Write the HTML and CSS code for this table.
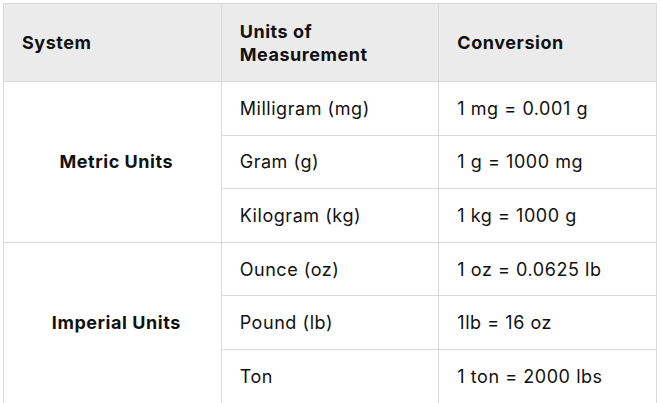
FILE: index.html
```html
<!DOCTYPE html>
<html>
<head>
<meta charset="utf-8">
<link rel="stylesheet" href="styles.css">
</head>
<body>
<table class="units">
  <thead>
    <tr>
      <th>System</th>
      <th>Units of<br>Measurement</th>
      <th>Conversion</th>
    </tr>
  </thead>
  <tbody>
    <tr>
      <td class="system" rowspan="3">Metric Units</td>
      <td>Milligram (mg)</td>
      <td>1 mg = 0.001 g</td>
    </tr>
    <tr>
      <td>Gram (g)</td>
      <td>1 g = 1000 mg</td>
    </tr>
    <tr>
      <td>Kilogram (kg)</td>
      <td>1 kg = 1000 g</td>
    </tr>
    <tr>
      <td class="system" rowspan="3">Imperial Units</td>
      <td>Ounce (oz)</td>
      <td>1 oz = 0.0625 lb</td>
    </tr>
    <tr>
      <td>Pound (lb)</td>
      <td>1lb = 16 oz</td>
    </tr>
    <tr>
      <td>Ton</td>
      <td>1 ton = 2000 lbs</td>
    </tr>
  </tbody>
</table>
</body>
</html>
```
FILE: styles.css
```css
html, body {
  margin: 0;
  padding: 0;
  background: #ffffff;
}
body {
  padding: 3px 0 0 3px;
  font-family: "Inter", "Liberation Sans", sans-serif;
  color: #111111;
}
.units {
  border-collapse: collapse;
  width: 654px;
  table-layout: fixed;
  font-size: 18px;
  letter-spacing: 0.55px;
}
.units th,
.units td {
  border: 1px solid #d9d9d9;
  text-align: left;
  vertical-align: middle;
  padding: 0 10px 0 18px;
}
.units th {
  background: #ebebeb;
  font-weight: 700;
  height: 77px;
  line-height: 23px;
}
.units td {
  height: 52.6px;
  font-weight: 400;
}
.units td.system {
  text-align: center;
  font-weight: 700;
}
```
